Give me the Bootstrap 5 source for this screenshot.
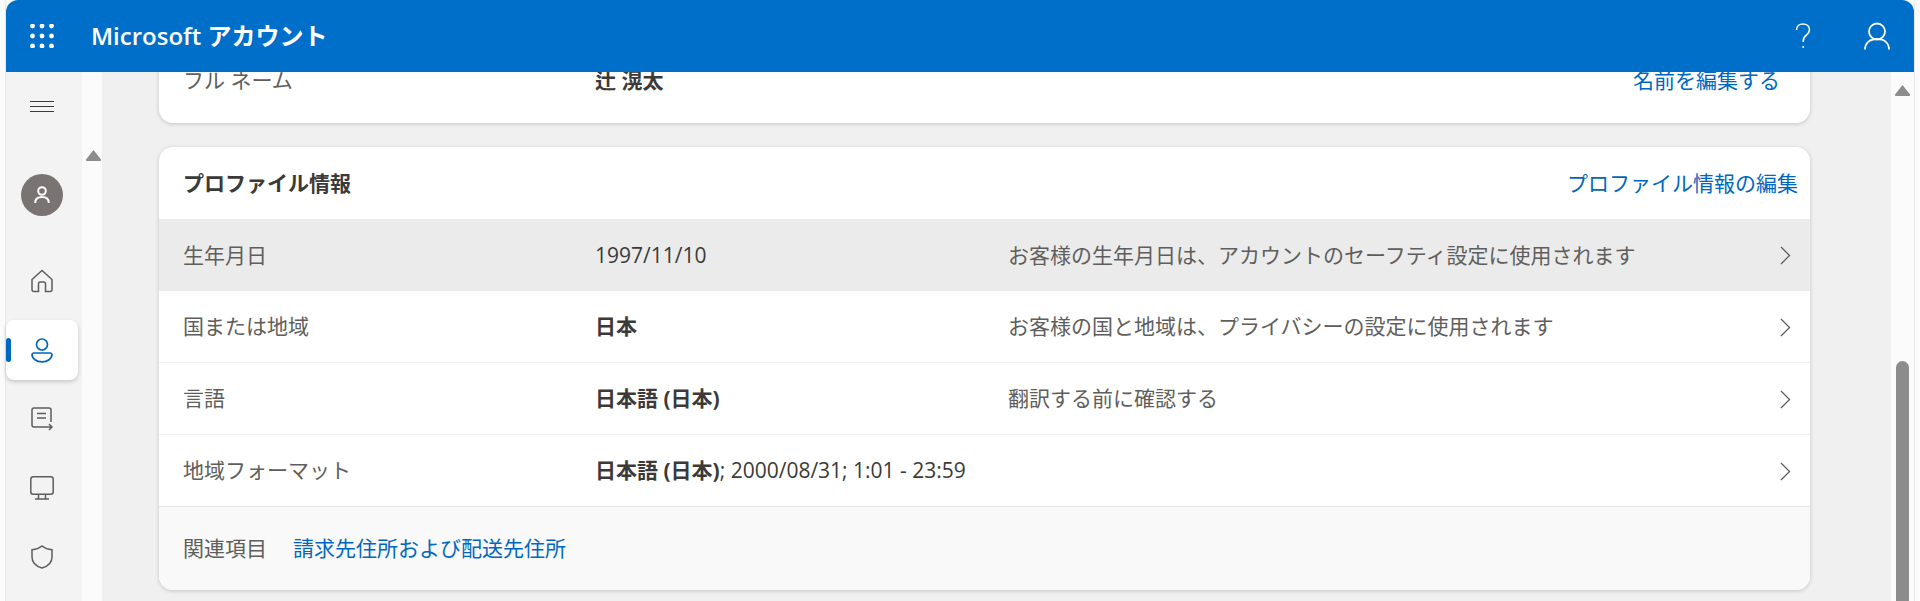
<!DOCTYPE html>
<html lang="ja">
<head>
<meta charset="utf-8">
<title>Microsoft アカウント</title>
<link href="https://cdn.jsdelivr.net/npm/bootstrap@5.3.0/dist/css/bootstrap.min.css" rel="stylesheet">
<style>
html,body{height:100%;overflow:hidden}
body{background:#fbfbfb;font-family:"Open Sans","Noto Sans CJK JP",sans-serif;font-size:21px;color:#605e5c}
.shell{height:601px;margin-left:5px;margin-right:5px;border-left:1px solid #e8e8e8;border-right:1px solid #e8e8e8}
.topbar{height:72px;background:#006fc9;color:#fff;border-radius:12px 12px 0 0;flex:none}
.waffle{width:71px}
.brand{font-size:24px;font-weight:600;margin-left:14px}
.top-q{margin-right:53px}
.top-u{margin-right:24px}
.body-row{height:529px}
.side{width:76px;background:#f3f3f3;flex:none;padding-right:4px}
.side-top{height:70px}
.side-gap{height:28px}
.side-item{height:69px}
.side-home{margin-top:30px}
.avatar{width:42px;height:42px;background:#797372;border-radius:50%}
.side-active{width:72px;height:60px;background:#fff;border-radius:8px;box-shadow:0 2px 4px rgba(0,0,0,.18);margin:5px 0 4.5px}
.side-active::before{content:"";display:block;width:5px;height:24px;background:#0067c0;border-radius:3px;margin-right:-5px}
.side-active svg{margin:0 auto}
.mini-bar{width:20px;background:#fbfbfb;flex:none;padding:78px 0 0 4px}
.main{background:#f0f0f0;overflow:hidden;min-width:0}
.sheet{width:1651px;margin:-28px 0 0 57px}
.acct{border:0;border-radius:14px;box-shadow:0 1px 4px rgba(0,0,0,.18);overflow:hidden;background:#fff}
.acct+.acct{margin-top:24px}
.acct-row{height:72px;border-bottom:1px solid #f0f0f0;padding:1px 19px 0 24px}
.acct-row.last{border-bottom:1px solid #e6e6e6}
.acct-row.first-plain{border-bottom:0;margin-bottom:7px;padding-right:12px}
.acct-row.hover{background:#ebebeb;border-bottom:0}
.acct-head{height:72px;padding:1px 12px 0 24px}
.acct-title{font-weight:700;color:#3b3a39}
.lbl{width:412px;flex:none}
.val{width:413px;flex:none;color:#3b3a39;font-weight:500}
.val b{font-weight:700}
.desc{flex:1 1 auto}
.chev{flex:none}
.lnk{color:#0067c0;text-decoration:none}
.lnk-end{margin-right:18px}
.acct-foot{height:83px;background:#f9f9f9;padding:0 24px;gap:26px}
.big-bar{width:23px;background:#fbfbfb;flex:none;padding:13px 0 0 4px}
.thumb{width:13px;height:240px;margin:265px 0 0 1px;background:#8c8c8c;border-radius:7px 7px 0 0}
</style>
</head>
<body>
<div class="shell d-flex flex-column">
  <header class="topbar d-flex align-items-center">
    <div class="waffle d-flex justify-content-center">
      <svg width="24" height="24" viewBox="0 0 24 24" fill="#fff"><circle cx="2.5" cy="2" r="2.4"/><circle cx="12" cy="2" r="2.4"/><circle cx="21.5" cy="2" r="2.4"/><circle cx="2.5" cy="12" r="2.4"/><circle cx="12" cy="12" r="2.4"/><circle cx="21.5" cy="12" r="2.4"/><circle cx="2.5" cy="22" r="2.4"/><circle cx="12" cy="22" r="2.4"/><circle cx="21.5" cy="22" r="2.4"/></svg>
    </div>
    <div class="brand flex-grow-1">Microsoft アカウント</div>
    <svg class="top-q" width="16" height="26" viewBox="0 0 16 26" fill="none" stroke="#fff" stroke-width="1.6"><path d="M1.5 7C1.5 3.5 4.2 1 8 1s6.5 2.5 6.5 5.8c0 2.4-1.2 3.7-3 5.2-1.8 1.4-3.2 2.8-3.2 5.5V19"/><circle cx="8.2" cy="24" r="1" fill="#fff" stroke="none"/></svg>
    <svg class="top-u" width="26" height="28" viewBox="0 0 26 28" fill="none" stroke="#fff" stroke-width="1.8"><circle cx="13" cy="9.5" r="8"/><path d="M1 27.5c0-6.5 4.5-10.5 12-10.5s12 4 12 10.5"/></svg>
  </header>
  <div class="body-row d-flex">
    <nav class="side d-flex flex-column align-items-stretch">
      <div class="side-top d-flex align-items-center justify-content-center">
        <svg width="24" height="12" viewBox="0 0 24 12" stroke="#3b3a39" stroke-width="1"><path d="M0 .5h24M0 5.5h24M0 10.5h24"/></svg>
      </div>
      <div class="side-gap"></div>
      <div class="d-flex justify-content-center mt-1"><div class="avatar d-flex align-items-center justify-content-center">
        <svg width="16" height="18" viewBox="0 0 16 18" fill="none" stroke="#fff" stroke-width="2"><circle cx="8" cy="5" r="3.8"/><path d="M1.2 17c0-4 2.6-6 6.8-6s6.8 2 6.8 6"/></svg>
      </div></div>
      <div class="side-item side-home d-flex align-items-center justify-content-center">
        <svg width="24" height="24" viewBox="0 0 24 24" fill="none" stroke="#605e5c" stroke-width="1.5"><path d="M2 10.5 12 1.500l10 9v10a2 2 0 0 1-2 2h-4.500v-8a1.500 1.500 0 0 0-1.500-1.500h-4a1.500 1.500 0 0 0-1.500 1.500v8H4a2 2 0 0 1-2-2z"/></svg>
      </div>
      <div class="side-active d-flex align-items-center">
        <svg width="24" height="25" viewBox="0 0 24 25" fill="none" stroke="#0067c0" stroke-width="1.700"><circle cx="12" cy="6.500" r="5.500"/><path d="M3.500 15h17a3 3 0 0 1 1.500 1.300c0 4.500-4.500 7.500-10 7.500S2 20.800 2 16.300A3 3 0 0 1 3.500 15z"/></svg>
      </div>
      <div class="side-item d-flex align-items-center justify-content-center">
        <svg width="22" height="24" viewBox="0 0 22 24" fill="none" stroke="#605e5c" stroke-width="1.500"><path d="M20 15V3a2 2 0 0 0-2-2H3a2 2 0 0 0-2 2v15a2 2 0 0 0 2 2h18M18 17l3 3-3 3M6 6.500h9M6 11h9"/></svg>
      </div>
      <div class="side-item d-flex align-items-center justify-content-center">
        <svg width="24" height="24" viewBox="0 0 24 24" fill="none" stroke="#605e5c" stroke-width="1.500"><rect x=".8" y=".8" width="22.400" height="17.500" rx="2.500"/><path d="M8.500 18.500v4.500M15.500 18.500v4.500M5 23h14"/></svg>
      </div>
      <div class="side-item d-flex align-items-center justify-content-center">
        <svg width="22" height="24" viewBox="0 0 22 24" fill="none" stroke="#605e5c" stroke-width="1.500"><path d="M11 1c3 2.500 6 3.500 10 3.800V12c0 5.500-4 9.300-10 11C5 21.300 1 17.500 1 12V4.800C5 4.500 8 3.500 11 1z"/></svg>
      </div>
    </nav>
    <div class="mini-bar"><svg class="d-block" width="15" height="11" viewBox="0 0 15 11" fill="#8c8c8c"><path d="M7.500 0 15 9.500a1 1 0 0 1-1 1.500H1a1 1 0 0 1-1-1.500z"/></svg></div>
    <main class="main flex-grow-1">
      <div class="sheet">
        <section class="card acct">
          <div class="acct-row first-plain d-flex align-items-center">
            <div class="lbl">フル ネーム</div>
            <div class="val"><b>辻 滉太</b></div>
            <div class="desc"></div>
            <a class="lnk lnk-end" href="#">名前を編集する</a>
          </div>
        </section>
        <section class="card acct">
          <div class="acct-head d-flex align-items-center justify-content-between">
            <div class="acct-title">プロファイル情報</div>
            <a class="lnk" href="#">プロファイル情報の編集</a>
          </div>
          <div class="acct-row hover d-flex align-items-center">
            <div class="lbl">生年月日</div>
            <div class="val">1997/11/10</div>
            <div class="desc">お客様の生年月日は、アカウントのセーフティ設定に使用されます</div>
            <svg class="chev" width="11" height="19" viewBox="0 0 11 19" fill="none" stroke="#605e5c" stroke-width="1.300"><path d="M1 1l8.500 8.500L1 18"/></svg>
          </div>
          <div class="acct-row d-flex align-items-center">
            <div class="lbl">国または地域</div>
            <div class="val"><b>日本</b></div>
            <div class="desc">お客様の国と地域は、プライバシーの設定に使用されます</div>
            <svg class="chev" width="11" height="19" viewBox="0 0 11 19" fill="none" stroke="#605e5c" stroke-width="1.300"><path d="M1 1l8.500 8.500L1 18"/></svg>
          </div>
          <div class="acct-row d-flex align-items-center">
            <div class="lbl">言語</div>
            <div class="val"><b>日本語 (日本)</b></div>
            <div class="desc">翻訳する前に確認する</div>
            <svg class="chev" width="11" height="19" viewBox="0 0 11 19" fill="none" stroke="#605e5c" stroke-width="1.300"><path d="M1 1l8.500 8.500L1 18"/></svg>
          </div>
          <div class="acct-row last d-flex align-items-center">
            <div class="lbl">地域フォーマット</div>
            <div class="val text-nowrap"><b>日本語 (日本)</b>; 2000/08/31; 1:01 - 23:59</div>
            <div class="desc"></div>
            <svg class="chev" width="11" height="19" viewBox="0 0 11 19" fill="none" stroke="#605e5c" stroke-width="1.300"><path d="M1 1l8.500 8.500L1 18"/></svg>
          </div>
          <div class="acct-foot d-flex align-items-center">
            <span>関連項目</span>
            <a class="lnk" href="#">請求先住所および配送先住所</a>
          </div>
        </section>
      </div>
    </main>
    <div class="big-bar">
      <svg class="d-block" width="15" height="11" viewBox="0 0 15 11" fill="#8c8c8c"><path d="M7.500 0 15 9.500a1 1 0 0 1-1 1.500H1a1 1 0 0 1-1-1.500z"/></svg>
      <div class="thumb"></div>
    </div>
  </div>
</div>
<script src="https://cdn.jsdelivr.net/npm/bootstrap@5.3.0/dist/js/bootstrap.bundle.min.js"></script>
</body>
</html>
